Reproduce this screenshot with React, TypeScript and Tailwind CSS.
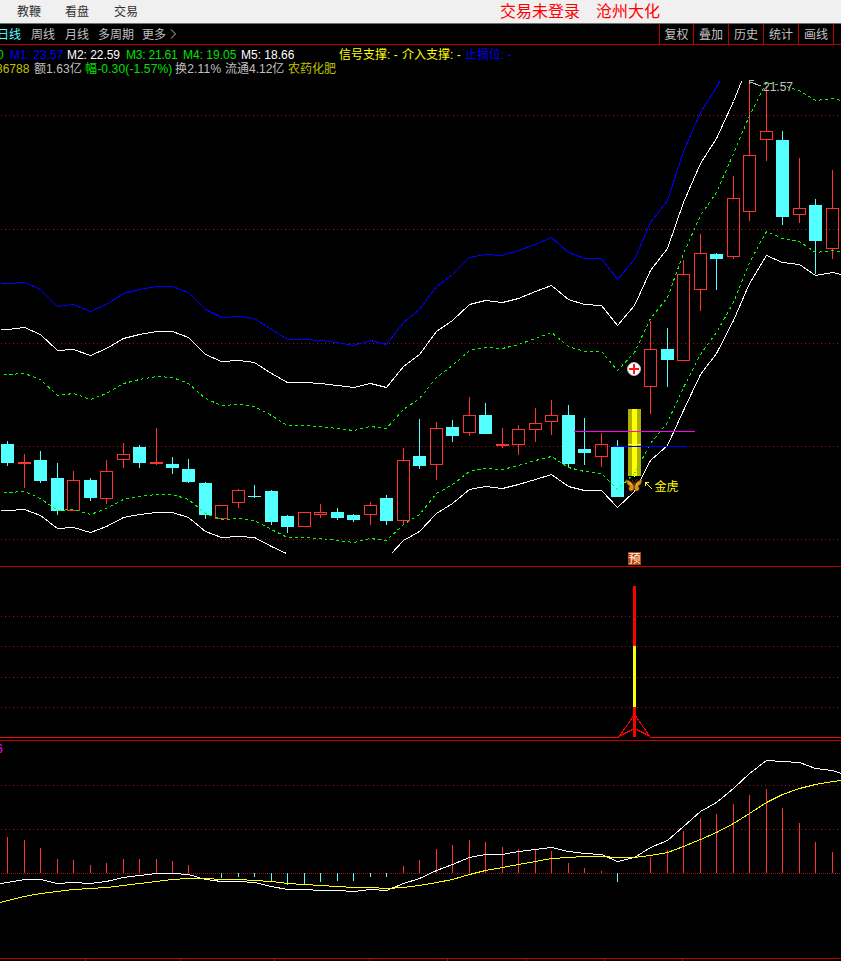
import clsx from "clsx";

type Candle = [high: number, top: number, bottom: number, low: number, dir: "u" | "d"];

// x centre of the n-th bar
const STEP = 16.49;
const barX = (i: number) => Math.floor(7.6 + i * STEP);

const candles: (Candle | null)[] = [
  [441, 444, 463, 466, "d"],
  [454, 462, 464, 488, "u"],
  [451, 460, 481, 483, "d"],
  [463, 478, 511, 515, "d"],
  [471, 480, 511, 511, "u"],
  [478, 480, 498, 501, "d"],
  [460, 471, 499, 504, "u"],
  [443, 454, 460, 468, "u"],
  [445, 447, 463, 468, "d"],
  [428, 462, 464, 465, "u"],
  [457, 464, 468, 474, "d"],
  [459, 469, 482, 483, "d"],
  [482, 483, 515, 519, "d"],
  [505, 505, 519, 519, "u"],
  [489, 490, 503, 508, "u"],
  [485, 496, 497, 498, "d"],
  [490, 491, 522, 525, "d"],
  [515, 516, 527, 533, "d"],
  [512, 512, 527, 527, "u"],
  [504, 512, 515, 518, "u"],
  [508, 512, 518, 520, "d"],
  [514, 515, 520, 522, "d"],
  [502, 505, 515, 525, "u"],
  [495, 498, 521, 525, "d"],
  [448, 460, 521, 524, "u"],
  [419, 456, 466, 469, "d"],
  [422, 428, 465, 480, "u"],
  [420, 427, 436, 442, "d"],
  [397, 415, 433, 436, "u"],
  [403, 415, 434, 434, "d"],
  [428, 444, 446, 448, "u"],
  [425, 429, 445, 455, "u"],
  [408, 423, 430, 442, "u"],
  [400, 415, 422, 435, "u"],
  [405, 415, 464, 467, "d"],
  [418, 449, 453, 465, "d"],
  [433, 444, 457, 467, "u"],
  [440, 447, 497, 497, "d"],
  null,
  [321, 349, 387, 414, "u"],
  [328, 349, 360, 387, "d"],
  [260, 274, 361, 361, "u"],
  [234, 253, 290, 311, "u"],
  [253, 254, 259, 290, "d"],
  [176, 198, 257, 259, "u"],
  [81, 155, 212, 221, "u"],
  [86, 131, 140, 161, "u"],
  [131, 140, 217, 225, "d"],
  [158, 208, 215, 223, "u"],
  [199, 205, 241, 274, "d"],
  [170, 208, 249, 259, "u"],
];

const bandBlue = [
  283, 282, 289, 306, 304, 311, 304, 293, 289, 286, 286, 292, 309, 317, 316, 318, 329, 339, 339, 340, 342, 345, 340,
  344, 322, 309, 286, 274, 257, 254, 255, 250, 244, 237, 252, 258, 258, 279, 259, 222, 200, 151, 112, 87,
];

const bandUpper = [
  329, 327, 334, 350, 349, 355, 348, 338, 334, 331, 331, 337, 354, 361, 360, 362, 373, 382, 382, 383, 385, 387, 383,
  387, 366, 354, 331, 320, 304, 300, 302, 298, 291, 285, 299, 304, 305, 325, 305, 270, 248, 202, 163, 138, 101,
];

const dashUpper = [
  374, 373, 379, 395, 393, 399, 393, 383, 379, 376, 377, 383, 398, 405, 404, 406, 415, 425, 425, 426, 428, 430, 426,
  428, 409, 398, 377, 365, 350, 347, 348, 344, 338, 332, 346, 351, 351, 370, 352, 318, 297, 253, 215, 192, 153, 115,
  82, 85, 90, 100, 98,
];

const dashLower = [
  492, 491, 498, 510, 509, 514, 508, 499, 496, 494, 494, 499, 513, 519, 518, 520, 529, 537, 537, 538, 540, 542, 538,
  540, 524, 514, 493, 484, 471, 468, 469, 465, 460, 456, 467, 471, 473, 489, 473, 443, 422, 387, 354, 332, 302, 262,
  231, 238, 241, 252, 250,
];

const bandLowerLeft = [
  510, 509, 515, 528, 527, 532, 526, 517, 514, 512, 512, 517, 531, 537, 536, 537, 546,
];

const bandLowerRight = [
  540, 531, 513, 503, 489, 486, 488, 484, 479, 474, 486, 490, 490, 507, 491, 460, 445, 410, 374, 353, 320, 283, 255,
  262, 264, 275, 272,
];

const dif = [
  882, 879, 879, 883, 882, 883, 881, 877, 875, 873, 873, 874, 879, 881, 881, 882, 886, 889, 889, 890, 890, 891, 889,
  890, 883, 878, 870, 864, 857, 854, 854, 851, 849, 847, 851, 853, 854, 861, 857, 847, 840, 826, 811, 802, 788, 773,
  760, 761, 762, 768, 770,
];

const dea = [
  900, 896, 893, 891, 889, 888, 887, 885, 883, 881, 879, 878, 878, 879, 879, 880, 881, 883, 884, 885, 886, 887, 887,
  888, 887, 885, 882, 879, 874, 870, 867, 864, 861, 858, 857, 856, 856, 857, 857, 855, 852, 846, 839, 832, 823, 813,
  802, 794, 788, 784, 781,
];

// tip of every histogram bar, the zero line is y = 873
const histogram = [
  837, 840, 848, 859, 860, 865, 863, 859, 859, 859, 861, 865, 0, 878, 877, 877, 882, 885, 884, 882, 881, 881, 877, 877,
  866, 860, 849, 845, 840, 842, 847, 849, 849, 851, 863, 868, 871, 882, 0, 857, 850, 831, 818, 814, 804, 795, 789, 808,
  823, 842, 852,
];

function toPoints(ys: number[], from = 0, head: number[][] = [], tail: number[][] = []) {
  const nodes = [...head, ...ys.map((y, i) => [barX(from + i), y]), ...tail];
  return nodes.map(([x, y]) => `${x + 0.5},${y + 0.5}`).join(" ");
}

function Grid({ ys, gap = 3 }: { ys: number[]; gap?: number }) {
  return (
    <>
      {ys.map((y) => (
        <line key={y} x1={1} x2={841} y1={y + 0.5} y2={y + 0.5} stroke="#a81414" strokeDasharray={`1 ${gap}`} />
      ))}
    </>
  );
}

function CandleBar({ x, candle }: { x: number; candle: Candle }) {
  const [high, top, bottom, low, dir] = candle;
  const color = dir === "u" ? "#ff3232" : "#54ffff";
  const cx = x + 0.5;
  return (
    <g stroke={color}>
      {high < top && <line x1={cx} x2={cx} y1={high} y2={top} />}
      {low > bottom && <line x1={cx} x2={cx} y1={bottom} y2={low} />}
      {dir === "u" ? (
        <rect x={x - 5.5} y={top + 0.5} width={12} height={bottom - top - 1} fill="none" />
      ) : (
        <rect x={x - 6} y={top} width={13} height={bottom - top} fill={color} stroke="none" />
      )}
    </g>
  );
}

function Butterfly() {
  return (
    <g shapeRendering="auto">
      <path
        d="M634 486 C632 482 629 480 626 480 C627 483 627 485 630 486 C628 488 629 491 631 491 C633 491 634 489 634 487 Z"
        fill="#d89018"
        stroke="#8a4c08"
        strokeWidth={0.7}
      />
      <path
        d="M634.5 486 C636 482 639 480 642 480 C641 483 641 485 638 486 C640 488 639 491 637 491 C635 491 634.5 489 634.5 487 Z"
        fill="#d89018"
        stroke="#8a4c08"
        strokeWidth={0.7}
      />
      <path d="M629 482.5 L632 485 M639 482.5 L636 485" stroke="#ffc840" strokeWidth={0.8} />
      <path d="M634.3 484 V489 M634 484 L632 479.5 M634.5 484 L636.5 479.5" stroke="#7a4a10" strokeWidth={0.8} />
    </g>
  );
}

function PricePanel() {
  return (
    <svg className="block h-[490px] w-[841px]" viewBox="0 76 841 490" shapeRendering="crispEdges" fill="none">
      <Grid ys={[115, 229, 343, 446, 539]} />
      {candles.map((c, i) => c && <CandleBar key={i} x={barX(i)} candle={c} />)}

      {/* signal day */}
      <rect x={628} y={409} width={13} height={67} fill="#b0b000" />
      <rect x={632} y={409} width={5} height={67} fill="#ffff00" />
      <rect x={634} y={476} width={1} height={1} fill="#ffff00" />
      <rect x={628} y={444} width={13} height={1} fill="#ffff54" />

      <polyline points={toPoints(bandBlue, 0, [[0, 283]], [[719, 81]])} stroke="#0000ff" />
      <polyline points={toPoints(bandUpper, 0, [[0, 329]], [[741, 81]])} stroke="#ffffff" />
      <polyline points={toPoints(dashUpper, 0, [[3, 374]], [[841, 100]])} stroke="#00ff00" strokeDasharray="3 3" />
      <polyline points={toPoints(dashLower, 0, [[3, 492]], [[841, 251]])} stroke="#00ff00" strokeDasharray="3 3" />
      <polyline points={toPoints(bandLowerLeft, 0, [[0, 510]], [[286, 553]])} stroke="#ffffff" />
      <polyline points={toPoints(bandLowerRight, 24, [[391, 553]], [[841, 274]])} stroke="#ffffff" />

      <rect x={574} y={431} width={121} height={1} fill="#ff00ff" />
      <rect x={613} y={446} width={74} height={1} fill="#0000ff" />

      <g shapeRendering="auto">
        <circle cx={634} cy={369} r={6.5} fill="#ffffff" stroke="#b8b8b8" />
        <path d="M634 364 V374 M629 369 H639" stroke="#f01818" strokeWidth={2} />
      </g>
      <Butterfly />

      <path d="M652.5 489.5 L645.5 482.5 M645 486 V482.5 H649" stroke="#ffff00" />
      <text x={654.5} y={491} className="font-['Noto_Sans_CJK_SC',sans-serif] text-[12px]" fill="#ffff00">
        金虎
      </text>
      <path d="M761 86 L750 82 M754 80.5 H749.5 V84" stroke="#c0c0c0" />
      <text x={763} y={91} textLength={30} className="font-['Liberation_Sans',sans-serif] text-[12px]" fill="#c0c0c0">
        21.57
      </text>

      <rect x={628} y={552} width={13} height={13} fill="#c04000" />
      <text x={628.5} y={563} className="font-['Noto_Sans_CJK_SC',sans-serif] text-[12px]" fill="#ffffff">
        预
      </text>
    </svg>
  );
}

function SignalPanel() {
  return (
    <svg className="block h-[173px] w-[841px]" viewBox="0 567 841 173" shapeRendering="crispEdges" fill="none">
      <Grid ys={[616, 646, 677, 707]} />
      <path d="M0 737.5 H618.5 L634.5 714.5 L650.5 737.5 H841" stroke="#ff0000" />
      <path d="M618.5 736.5 L634.5 728.5 L650.5 736.5" stroke="#ff0000" />
      <rect x={633} y={586} width={3} height={151} fill="#ff0000" />
      <rect x={633} y={646} width={3} height={61} fill="#ffff00" />
    </svg>
  );
}

function MacdPanel() {
  return (
    <svg className="block h-[220px] w-[841px]" viewBox="0 741 841 220" shapeRendering="crispEdges" fill="none">
      <Grid ys={[785, 829]} />
      <Grid ys={[873]} gap={1} />
      <text x={-4} y={753} className="font-['Liberation_Sans',sans-serif] text-[12px]" fill="#ff00ff">
        6
      </text>
      {histogram.map((y, i) =>
        y ? (
          <rect
            key={i}
            x={barX(i)}
            y={Math.min(y, 873)}
            width={1}
            height={Math.abs(873 - y)}
            fill={y < 873 ? "#ff3232" : "#54ffff"}
          />
        ) : null
      )}
      <polyline points={toPoints(dif, 0, [[0, 883]], [[841, 773]])} stroke="#ffffff" />
      <polyline points={toPoints(dea, 0, [[0, 902]], [[841, 780]])} stroke="#ffff00" />
      <rect x={0} y={958} width={841} height={1} fill="#c00000" />
      {[85, 180, 274, 369, 447, 526, 604, 682].map((x) => (
        <rect key={x} x={x} y={959} width={1} height={2} fill="#c00000" />
      ))}
    </svg>
  );
}

const periods = [
  { label: "日线", className: "w-[34px] text-[#54ffff]" },
  { label: "周线", className: "w-[34px]" },
  { label: "月线", className: "w-[33px]" },
  { label: "多周期", className: "w-11" },
  { label: "更多", className: "w-7" },
];

const indicators = [
  { label: "0", className: "w-[13px] text-[#00e000]" },
  { label: "M1: 23.57", className: "w-[57px] text-[#0000ff]" },
  { label: "M2: 22.59", className: "w-[59px] tracking-[-0.05px] text-white" },
  { label: "M3: 21.61", className: "w-[57px] tracking-[-0.2px] text-[#00e000]" },
  { label: "M4: 19.05", className: "w-[58px] text-[#00e000]" },
  { label: "M5: 18.66", className: "w-[98px] text-white" },
  { label: "信号支撑: -", className: "w-[63px] text-[#ffff00]" },
  { label: "介入支撑: -", className: "w-[63px] text-[#ffff00]" },
  { label: "止损位: -", className: "text-[#0000ff]" },
];

const stats = [
  { label: "36788", className: "w-[38px] text-[#c0c000]" },
  { label: "额1.63亿", className: "w-[51px] tracking-[0.1px]" },
  { label: "幅-0.30(-1.57%)", className: "w-[90px] tracking-[0.15px] text-[#00e000]" },
  { label: "换2.11%", className: "w-[50px] tracking-[0.2px]" },
  { label: "流通4.12亿", className: "w-[63px]" },
  { label: "农药化肥", className: "text-[#c0c000]" },
];

export default function App() {
  return (
    <div className="flex h-[961px] w-[841px] flex-col overflow-hidden bg-black font-['Liberation_Sans','Noto_Sans_CJK_SC',sans-serif] text-[12px] whitespace-nowrap text-[#c0c0c0]">
      <header className="flex h-6 shrink-0 items-center border-b border-[#707070] bg-[#f0f0f0] pl-[17px] text-[#303030]">
        <span className="w-12">教鞭</span>
        <span className="w-[49px]">看盘</span>
        <span className="w-[386px]">交易</span>
        <span className="w-24 text-[16px] text-[#ff0000]">交易未登录</span>
        <span className="text-[16px] text-[#ff0000]">沧州大化</span>
      </header>

      <nav className="flex h-[21px] shrink-0 items-stretch justify-between border-b border-[#c00000] leading-[22px]">
        <div className="-ml-[3px] flex">
          {periods.map((p) => (
            <span key={p.label} className={clsx("shrink-0", p.className)}>
              {p.label}
            </span>
          ))}
          <svg className="mt-[5px] h-[10px] w-[7px]" viewBox="0 0 7 10" fill="none" stroke="#c0c0c0">
            <path d="M1 0.5 L5.5 5 L1 9.5" />
          </svg>
        </div>
        <div className="mr-[7px] flex border-r border-[#c00000]">
          {["复权", "叠加", "历史", "统计", "画线"].map((label, i) => (
            <button
              key={label}
              className={clsx("h-5 border-l border-[#c00000] text-center", i === 0 ? "w-[34px]" : "w-[35px]")}
            >
              {label}
            </button>
          ))}
        </div>
      </nav>

      <section className="h-[31px] shrink-0 pt-[3px]">
        <div className="-ml-[3px] flex h-[14px] leading-[14px]">
          {indicators.map((m) => (
            <span key={m.label} className={clsx("shrink-0", m.className)}>
              {m.label}
            </span>
          ))}
        </div>
        <div className="-ml-1 flex h-[14px] leading-[14px]">
          {stats.map((s) => (
            <span key={s.label} className={clsx("shrink-0", s.className)}>
              {s.label}
            </span>
          ))}
        </div>
      </section>

      <main className="flex flex-col">
        <div className="border-b border-[#c00000]">
          <PricePanel />
        </div>
        <div className="border-b border-[#c00000]">
          <SignalPanel />
        </div>
        <MacdPanel />
      </main>
    </div>
  );
}
